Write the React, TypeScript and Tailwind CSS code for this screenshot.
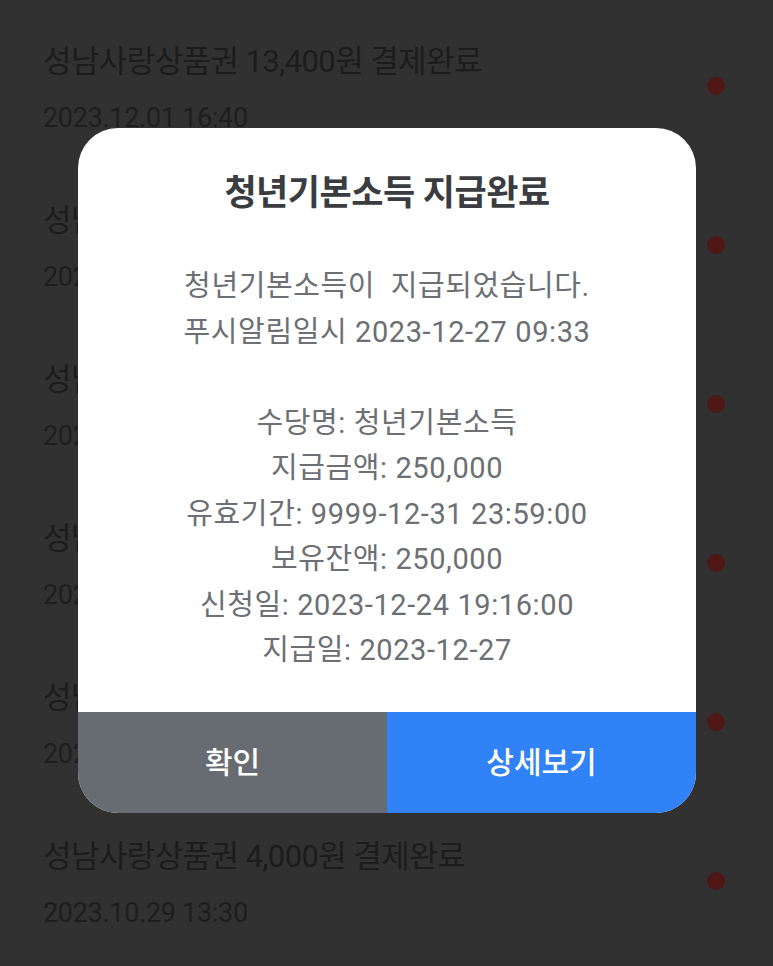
import React from "react";

const items = [
  { title: "성남사랑상품권 13,400원 결제완료", date: "2023.12.01 16:40" },
  { title: "성남사랑상품권 10,000원 결제완료", date: "2023.11.28 12:10" },
  { title: "성남사랑상품권 8,500원 결제완료", date: "2023.11.20 18:22" },
  { title: "성남사랑상품권 22,000원 결제완료", date: "2023.11.12 13:05" },
  { title: "성남사랑상품권 6,000원 결제완료", date: "2023.11.03 09:48" },
  { title: "성남사랑상품권 4,000원 결제완료", date: "2023.10.29 13:30" },
];

const body = [
  "청년기본소득이  지급되었습니다.",
  "푸시알림일시 2023-12-27 09:33",
  "",
  "수당명: 청년기본소득",
  "지급금액: 250,000",
  "유효기간: 9999-12-31 23:59:00",
  "보유잔액: 250,000",
  "신청일: 2023-12-24 19:16:00",
  "지급일: 2023-12-27",
];

export default function App() {
  return (
    <div
      className="relative w-[773px] h-[966px] overflow-hidden bg-[#313131]"
      style={{ fontFamily: 'Roboto, "Noto Sans CJK KR", "Noto Sans", sans-serif' }}
    >
      <div className="flex flex-col">
        {items.map((it, i) => (
          <div key={i} className="h-[159px] flex items-start justify-between pl-[43px] pr-[48px] pt-[42px]">
            <div className="flex flex-col gap-[20px]">
              <div className="text-[31px] leading-[40px] tracking-[-0.6px] text-[#1c1c1c]">{it.title}</div>
              <div className="text-[27px] leading-[32px] tracking-[-0.3px] text-[#1e1e1e]">{it.date}</div>
            </div>
            <div className="mt-[35px] w-[18px] h-[18px] rounded-full bg-[#4f1816]" />
          </div>
        ))}
      </div>

      <div className="absolute left-[78px] top-[128px] w-[618px] h-[685px] rounded-[40px] overflow-hidden bg-white flex flex-col">
        <div className="pt-[46px] text-center text-[35px] leading-[40px] font-bold tracking-[-0.5px] text-[#3a3c3f]">
          청년기본소득 지급완료
        </div>
        <div className="mt-[50px] flex flex-col items-center text-[29px] leading-[45.5px] tracking-[0.6px] text-[#6c6f73]">
          {body.map((l, i) => (
            <div key={i} className="h-[45.5px] whitespace-pre">{l}</div>
          ))}
        </div>
        <div className="mt-auto h-[101px] flex">
          <button className="flex-1 bg-[#676c72] text-white text-[30px] font-medium flex items-center justify-center">
            확인
          </button>
          <button className="flex-1 bg-[#3182f6] text-white text-[30px] font-medium flex items-center justify-center">
            상세보기
          </button>
        </div>
      </div>
    </div>
  );
}
